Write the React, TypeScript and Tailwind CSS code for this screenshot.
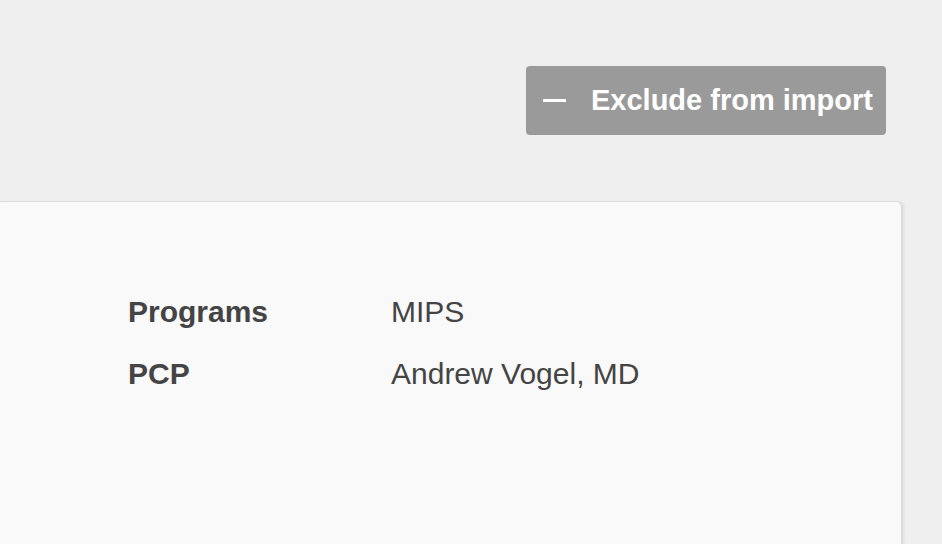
import React, { FC } from 'react';

const rows = [
  { label: 'Programs', value: 'MIPS' },
  { label: 'PCP', value: 'Andrew Vogel, MD' },
];

const App: FC = () => {
  return (
    <div
      className="flex h-screen w-full flex-col overflow-hidden bg-[#efefef] text-[#444444]"
      style={{ fontFamily: '"Liberation Sans", Arial, sans-serif' }}>
      <div className="flex justify-end pt-[66px] pr-[56px]">
        <button className="flex h-[69px] w-[360px] items-center rounded-[4px] bg-[#9a9a9a] pl-[17px] text-white">
          <span className="block h-[3px] w-[23px] bg-white" />
          <span className="ml-[25px] text-[29px] font-bold leading-none">Exclude from import</span>
        </button>
      </div>
      <div className="mt-[66px] mr-[39px] flex-1 rounded-tr-[6px] border-t border-r-2 border-[#dcdcdc] bg-[#f9f9f9] pt-[92px] pl-[128px] shadow-[2px_0_2px_rgba(0,0,0,0.04)]">
        <div className="grid grid-cols-[263px_auto] gap-y-[26px] text-[30px] leading-[36px]">
          {rows.map((row) => (
            <React.Fragment key={row.label}>
              <div className="font-bold">{row.label}</div>
              <div>{row.value}</div>
            </React.Fragment>
          ))}
        </div>
      </div>
    </div>
  );
};

export default App;
